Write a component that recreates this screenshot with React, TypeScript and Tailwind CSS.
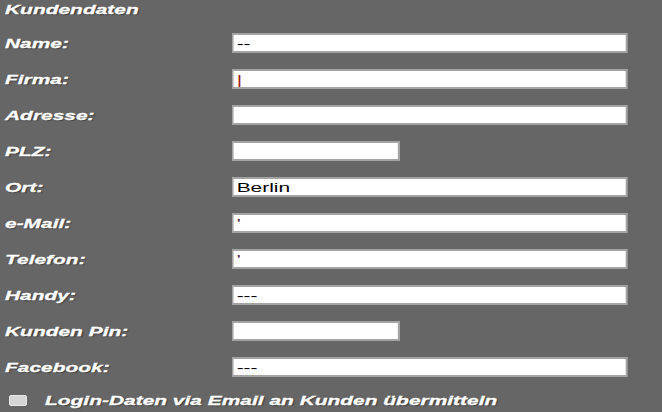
const fields: { label: string; value: string; short?: boolean; mark?: string }[] = [
  { label: "Name:", value: "--" },
  { label: "Firma:", value: "|", mark: "text-[#9b1b1b]" },
  { label: "Adresse:", value: "" },
  { label: "PLZ:", value: "", short: true },
  { label: "Ort:", value: "Berlin" },
  { label: "e-Mail:", value: "'", mark: "text-[#5a1a4a]" },
  { label: "Telefon:", value: "'", mark: "text-[#5a1a4a]" },
  { label: "Handy:", value: "---" },
  { label: "Kunden Pin:", value: "", short: true },
  { label: "Facebook:", value: "---" },
];

const labelText =
  "block origin-left scale-x-[1.55] text-[13.5px] font-bold italic text-white leading-none [-webkit-text-stroke:0.3px_white] [text-shadow:1px_1px_1px_rgba(0,0,0,0.35)]";

export default function App() {
  return (
    <div
      className="w-[662px] h-[412px] bg-[#666666] overflow-hidden leading-none"
      style={{ fontFamily: '"Liberation Sans", Arial, sans-serif' }}
    >
      <div className="h-[33px] pl-[5px] pt-[3px] flex items-start">
        <span className={labelText}>Kundendaten</span>
      </div>

      <div className="flex flex-col gap-4">
        {fields.map((f) => (
          <div key={f.label} className="flex items-center h-5">
            <div className="w-[232px] pl-[5px] pt-[2px] flex items-center">
              <span className={labelText}>{f.label}</span>
            </div>
            <input
              readOnly
              value={f.value}
              className={`h-5 ${f.short ? "w-[108px]" : "w-[255px]"} origin-left scale-x-[1.55] bg-white border-x border-y-2 border-[#a4a4a4] px-[2px] text-[13.5px] leading-none outline-none ${f.mark ?? "text-black"}`}
            />
          </div>
        ))}
      </div>

      <div className="flex items-center h-5 mt-[13px] pl-[9px]">
        <div className="w-[18px] h-[11px] bg-[#d6d6d6] border border-[#e8e8e8] rounded-[2px]" />
        <div className="pl-[18px] pt-[2px] flex items-center">
          <span className={labelText}>Login-Daten via Email an Kunden übermitteln</span>
        </div>
      </div>
    </div>
  );
}
